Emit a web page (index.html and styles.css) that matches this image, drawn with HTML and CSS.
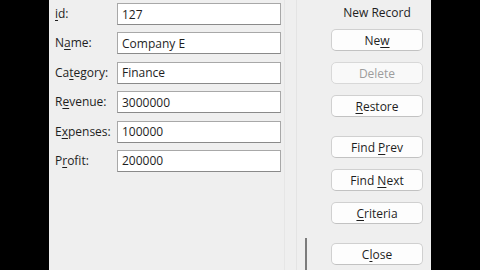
FILE: index.html
```html
<!DOCTYPE html>
<html lang="en">
<head>
  <meta charset="UTF-8">
  <meta name="viewport" content="width=device-width, initial-scale=1.0">
  <title>Data Form</title>
  <link rel="stylesheet" href="styles.css">
</head>
<body>
<div class="form-window">
  <!-- Record fields -->
  <div class="fields">
    <label class="field-label"><u>i</u>d:</label>
    <input class="field-input" type="text" value="127">
    <label class="field-label">N<u>a</u>me:</label>
    <input class="field-input" type="text" value="Company E">
    <label class="field-label">Ca<u>t</u>egory:</label>
    <input class="field-input" type="text" value="Finance">
    <label class="field-label">R<u>e</u>venue:</label>
    <input class="field-input" type="text" value="3000000">
    <label class="field-label">E<u>x</u>penses:</label>
    <input class="field-input" type="text" value="100000">
    <label class="field-label">P<u>r</u>ofit:</label>
    <input class="field-input" type="text" value="200000">
  </div>

  <!-- Record scroller -->
  <div class="scroller">
    <div class="scroll-thumb"></div>
  </div>

  <!-- Actions -->
  <div class="actions">
    <div class="record-status">New Record</div>
    <button class="btn">Ne<u>w</u></button>
    <button class="btn" disabled>Delete</button>
    <button class="btn"><u>R</u>estore</button>
    <button class="btn group-start">Find <u>P</u>rev</button>
    <button class="btn">Find <u>N</u>ext</button>
    <button class="btn"><u>C</u>riteria</button>
    <button class="btn group-start">C<u>l</u>ose</button>
  </div>
</div>
</body>
</html>
```

FILE: styles.css
```css
body {
  margin: 0;
  background: #000;
  font-family: "Open Sans", "Noto Sans", sans-serif;
  font-size: 12px;
  color: #1e1e1e;
  overflow: hidden;
}

.form-window {
  margin-left: 49px;
  width: 382px;
  height: 270px;
  background: #efefef;
  display: flex;
  box-sizing: border-box;
}

.fields {
  display: grid;
  grid-template-columns: 62px 164px;
  grid-auto-rows: 22px;
  row-gap: 7.4px;
  align-items: center;
  padding: 3px 0 0 6px;
  width: 226px;
}

.field-label {
  line-height: 22px;
}
.field-label u,
.btn u {
  text-decoration-thickness: 1px;
  text-underline-offset: 2px;
}

.field-input {
  height: 22px;
  box-sizing: border-box;
  border: 1px solid #a8a8a8;
  border-bottom-color: #8a8a8a;
  background: #fff;
  padding: 0 4px;
  font: inherit;
  color: #1e1e1e;
  outline: none;
}

.scroller {
  width: 49px;
  margin-left: 3px;
  position: relative;
  border-left: 1px solid #e6e6e6;
  box-sizing: border-box;
}
.scroller::before {
  content: "";
  position: absolute;
  left: 11px;
  top: 0;
  bottom: 0;
  width: 1px;
  background: #e4e4e4;
}
.scroll-thumb {
  position: absolute;
  left: 20px;
  top: 238px;
  width: 2px;
  height: 32px;
  background: #7c7c7c;
}

.actions {
  width: 92px;
  margin-left: -2px;
  display: flex;
  flex-direction: column;
  gap: 11px;
  padding-top: 5px;
}

.record-status {
  text-align: center;
  height: 16px;
  line-height: 16px;
  margin-bottom: -3px;
}

.btn {
  height: 22px;
  background: #fdfdfd;
  border: 1px solid #d0d0d0;
  border-bottom-color: #c2c2c2;
  border-radius: 5px;
  font: inherit;
  color: #1e1e1e;
  padding: 0;
  cursor: pointer;
}
.btn:disabled {
  color: #9d9d9d;
  background: #f9f9f9;
  border-color: #d8d8d8;
  cursor: default;
}
.btn.group-start {
  margin-top: 8px;
}
```
